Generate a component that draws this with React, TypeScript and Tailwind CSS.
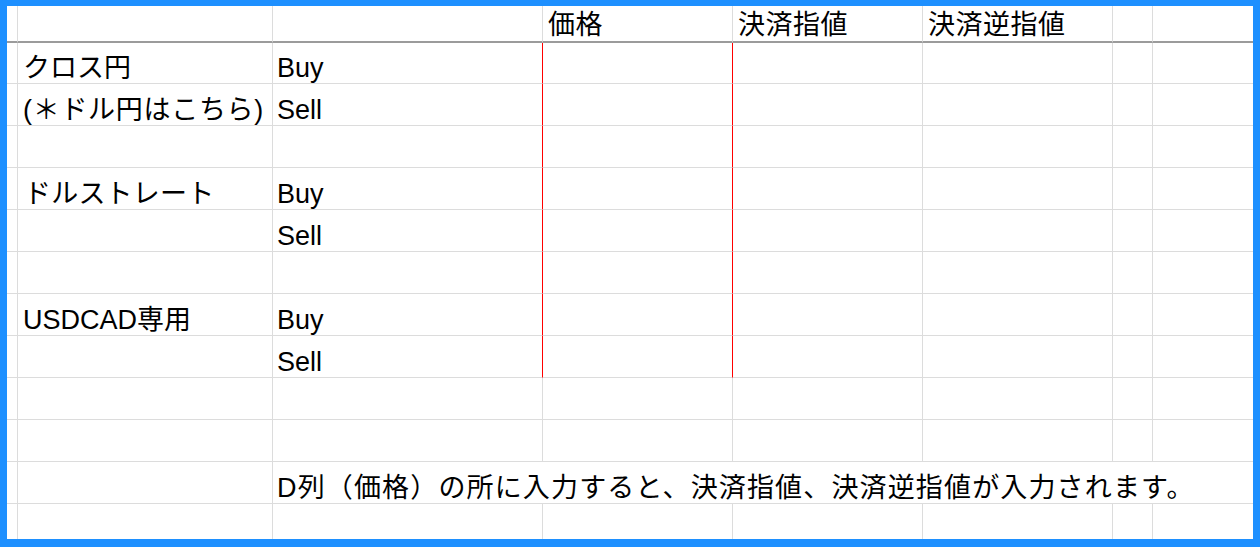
const font = { fontFamily: '"Liberation Sans", "Noto Sans CJK JP", sans-serif' };

type Row = { label?: string; side?: string; h: string; red?: boolean; labelPad?: string };

const rows: Row[] = [
  { label: "クロス円", side: "Buy", h: "h-[41px]", red: true },
  { label: "(＊ドル円はこちら)", side: "Sell", h: "h-[42px]", red: true, labelPad: "tracking-[0.7px]" },
  { h: "h-[42px]", red: true },
  { label: "ドルストレート", side: "Buy", h: "h-[42px]", red: true, labelPad: "pl-[6px] tracking-[0.2px]" },
  { side: "Sell", h: "h-[42px]", red: true },
  { h: "h-[42px]", red: true },
  { label: "USDCAD専用", side: "Buy", h: "h-[42px]", red: true },
  { side: "Sell", h: "h-[42px]", red: true },
  { h: "h-[42px]" },
  { h: "h-[42px]" },
];

const cell = "border-r border-b border-[#dcdcdc] flex items-end pb-[1px] whitespace-nowrap";
const head = "h-[37px] border-r border-r-[#dcdcdc] border-b-2 border-b-[#9b9b9b] flex items-end pb-[2px] pl-[5px] tracking-[0.5px]";

const App = () => {
  return (
    <div
      className="w-[1260px] h-[547px] bg-white border-t-[6px] border-l-[7px] border-r-[7px] border-b-[8px] border-[#1e90ff] text-black text-[27px] leading-none overflow-hidden"
      style={font}
    >
      <div className="grid grid-cols-[11px_255px_270px_190px_190px_190px_40px_100px]">
        {/* header */}
        <div className="h-[37px] border-r border-r-[#dcdcdc] border-b-2 border-b-[#9b9b9b]" />
        <div className="h-[37px] border-r border-r-[#dcdcdc] border-b-2 border-b-[#9b9b9b]" />
        <div className="h-[37px] border-r border-r-[#dcdcdc] border-b-2 border-b-[#9b9b9b]" />
        <div className={head}>価格</div>
        <div className={head}>決済指値</div>
        <div className={head}>決済逆指値</div>
        <div className="h-[37px] border-r border-r-[#dcdcdc] border-b-2 border-b-[#9b9b9b]" />
        <div className="h-[37px] border-b-2 border-b-[#9b9b9b]" />

        {rows.map((r, i) => (
          <div key={i} className="contents">
            <div className={`${r.h} ${cell}`} />
            <div className={`${r.h} ${cell} overflow-visible pl-[5px] ${r.labelPad ?? ""}`}>{r.label}</div>
            <div className={`${r.h} ${cell} pl-[4px] ${r.red ? "border-r-[#ff0000]" : ""}`}>{r.side}</div>
            <div className={`${r.h} ${cell} ${r.red ? "border-r-[#ff0000]" : ""}`} />
            <div className={`${r.h} ${cell}`} />
            <div className={`${r.h} ${cell}`} />
            <div className={`${r.h} ${cell}`} />
            <div className={`${r.h} border-b border-[#dcdcdc]`} />
          </div>
        ))}

        {/* note row */}
        <div className={`h-[42px] ${cell}`} />
        <div className={`h-[42px] ${cell}`} />
        <div className="col-span-6 h-[42px] border-b border-[#dcdcdc] flex items-end pb-[1px] pl-[4px] whitespace-nowrap tracking-[1.15px]">
          D列（価格）の所に入力すると、決済指値、決済逆指値が入力されます。
        </div>

        {/* last row */}
        <div className="h-[35px] border-r border-[#dcdcdc]" />
        <div className="h-[35px] border-r border-[#dcdcdc]" />
        <div className="h-[35px] border-r border-[#dcdcdc]" />
        <div className="h-[35px] border-r border-[#dcdcdc]" />
        <div className="h-[35px] border-r border-[#dcdcdc]" />
        <div className="h-[35px] border-r border-[#dcdcdc]" />
        <div className="h-[35px] border-r border-[#dcdcdc]" />
        <div className="h-[35px]" />
      </div>
    </div>
  );
};

export default App;
